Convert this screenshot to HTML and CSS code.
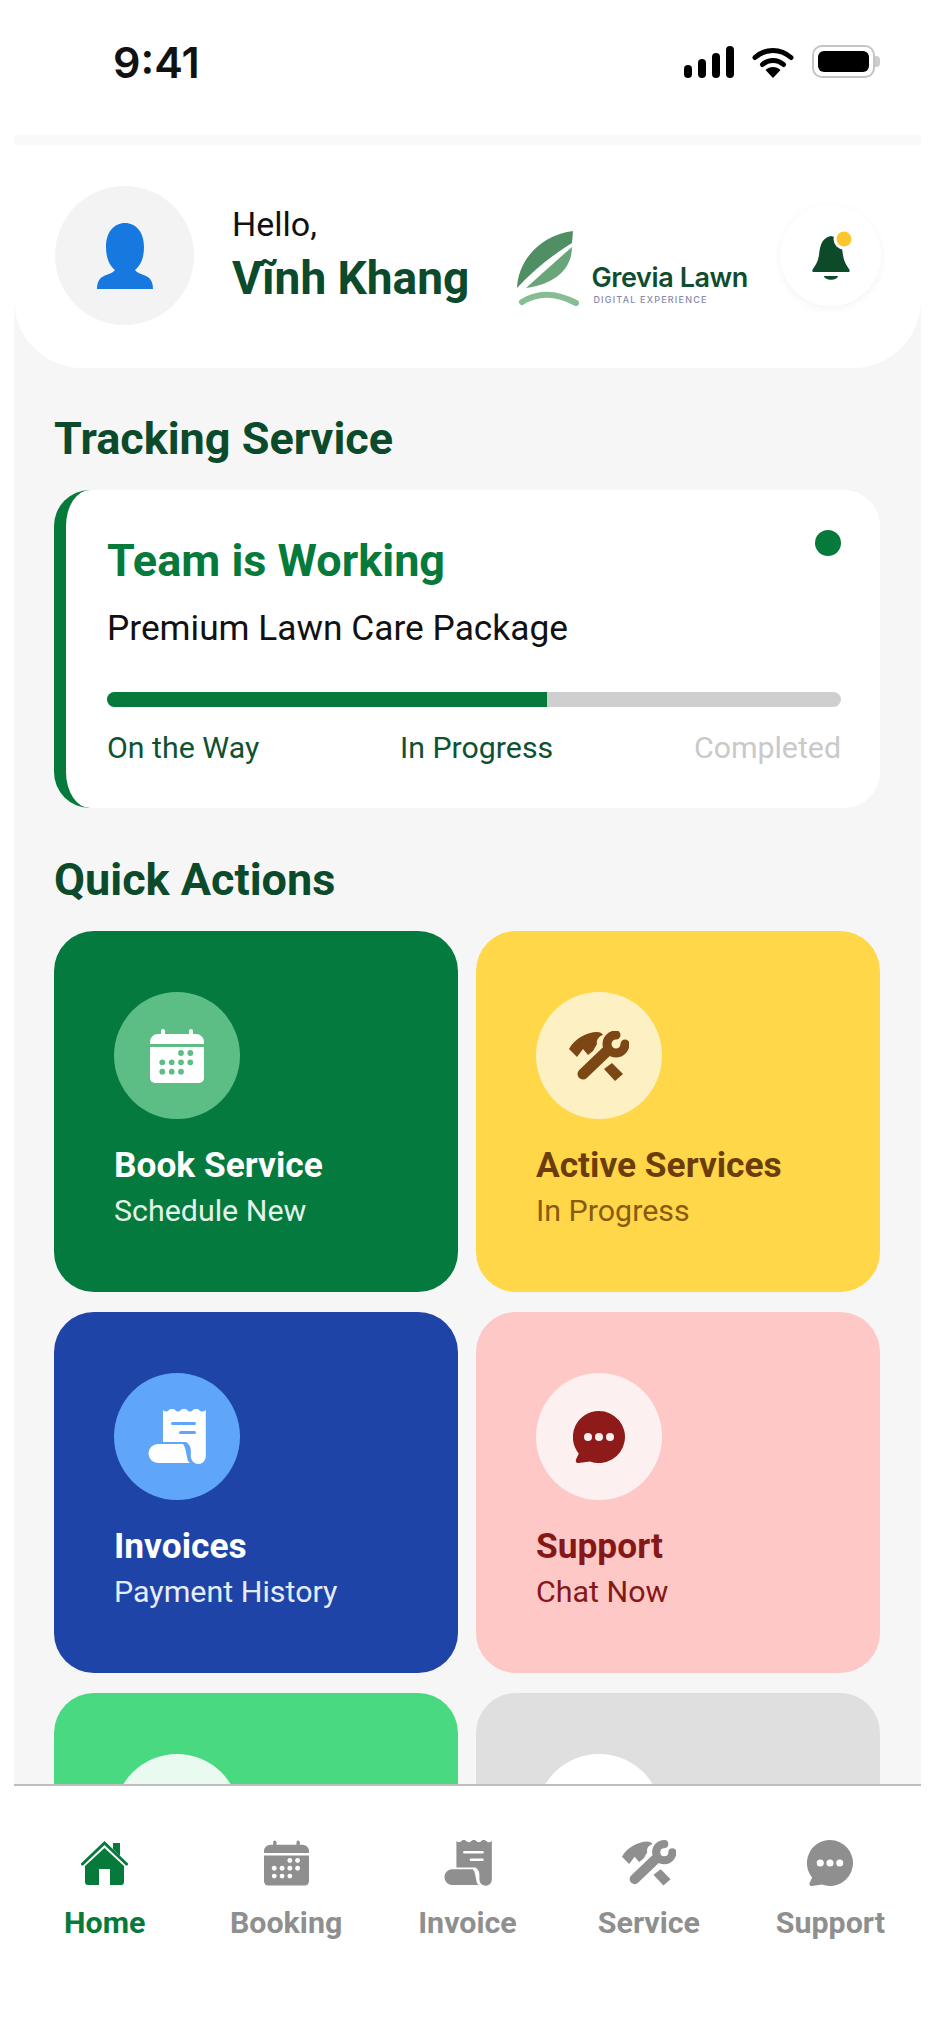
FILE: index.html
```html
<!DOCTYPE html>
<html lang="en">

<head>
  <meta charset="UTF-8">
  <meta name="viewport" content="width=device-width, initial-scale=1.0">
  <title>Grevia Lawn</title>
  <link rel="stylesheet" href="styles.css">
</head>

<body>

  <!-- shared icons -->
  <svg class="sprite" aria-hidden="true">
    <symbol id="i-calendar" viewBox="0 0 54 54">
      <path d="M11 5V2a2 2 0 0 1 4 0v3h24V2a2 2 0 0 1 4 0v3h3a8 8 0 0 1 8 8v2H0v-2a8 8 0 0 1 8-8z"/>
      <path d="M0 18h54v31a5 5 0 0 1-5 5H5a5 5 0 0 1-5-5z"/>
      <g class="hole">
        <circle cx="31" cy="24" r="2.9"/><circle cx="40.3" cy="24" r="2.9"/>
        <circle cx="12.3" cy="33.3" r="2.9"/><circle cx="21.7" cy="33.3" r="2.9"/><circle cx="31" cy="33.3" r="2.9"/><circle cx="40.3" cy="33.3" r="2.9"/>
        <circle cx="12.3" cy="42.7" r="2.9"/><circle cx="21.7" cy="42.7" r="2.9"/><circle cx="31" cy="42.7" r="2.9"/>
      </g>
    </symbol>
    <symbol id="i-tools" viewBox="0 0 60 50">
      <path d="M0 18C5 8 18 1 28 1 31 1 33 2 34 4 30 5 27 9 28 13L24 20 19 24 14 18 8 26Z"/>
      <path d="M35 38 43 32 54 43 46 50Z"/>
      <path d="M14 43 37 21" class="line" stroke-width="11" stroke-linecap="round"/>
      <path d="M47 4A9 9 0 1 0 56 13" class="line" stroke-width="9" stroke-linecap="round"/>
    </symbol>
    <symbol id="i-receipt" viewBox="0 0 58 55">
      <path d="M15 1q3 3 6 0t6 0 6 0 6 0 6 0 6 0 6.800 0V47.500a7.500 7.500 0 0 1-15 0V42C43 38 41 35 38 33H15z"/>
      <path d="M10 35H35C38 39 38 44 39 48 39.500 51 40 53 42 54H10a9.500 9.500 0 0 1 0-19z"/>
      <g class="hole">
        <rect x="23" y="13" width="25" height="3" rx="1.500"/>
        <rect x="31" y="22" width="17" height="3" rx="1.500"/>
      </g>
    </symbol>
    <symbol id="i-chat" viewBox="0 0 52 52">
      <path d="M26 0a26 26 0 1 1-9 50.400L5.500 52C3 52.200 2.400 50.500 3 48.500L5.800 42.500A26 26 0 0 1 26 0z"/>
      <g class="hole">
        <circle cx="15" cy="26" r="4"/><circle cx="26" cy="26" r="4"/><circle cx="37" cy="26" r="4"/>
      </g>
    </symbol>
    <symbol id="i-home" viewBox="0 0 47 44">
      <path d="M32 2h7v13l-7-7z"/>
      <path d="M23.500 7 43 25v16a3 3 0 0 1-3 3H29V28H18v16H7a3 3 0 0 1-3-3V25z"/>
      <path d="M1.500 23 23.500 2l22 21" class="line" fill="none" stroke-width="3" stroke-linecap="round"/>
    </symbol>
  </svg>

  <div class="status-bar">
    <span class="time">9:41</span>
    <div class="status-icons">
      <div class="signal">
        <span class="bar bar-1"></span>
        <span class="bar bar-2"></span>
        <span class="bar bar-3"></span>
        <span class="bar bar-4"></span>
      </div>
      <svg class="wifi" viewBox="0 0 42 32">
        <path d="M3 11.500C13.500 2 28.500 2 39 11.500" fill="none" stroke="#000" stroke-width="5" stroke-linecap="round"/>
        <path d="M10.500 18.500C16.500 13 25.500 13 31.500 18.500" fill="none" stroke="#000" stroke-width="5" stroke-linecap="round"/>
        <path d="M13.500 24C17.500 20 24.500 20 28.500 24L21 32z"/>
      </svg>
      <div class="battery">
        <div class="battery-body"><span class="battery-level"></span></div>
        <span class="battery-nub"></span>
      </div>
    </div>
  </div>

  <div class="app">
    <main class="content">
      <header class="header">
        <div class="avatar">
          <svg class="avatar-icon" viewBox="0 0 56 66">
            <path d="M28 0C39 0 47 9 47 24 47 36 43 43 38 47 40 50 45 51 49 53 54 55 56 60 56 66H0C0 60 2 55 7 53 11 51 16 50 18 47 13 43 9 36 9 24 9 9 17 0 28 0z"/>
          </svg>
        </div>
        <div class="greeting">
          <div class="hello">Hello,</div>
          <div class="name">Vĩnh Khang</div>
        </div>
        <div class="logo">
          <svg class="logo-mark" viewBox="0 0 64 76">
            <path d="M1 58C2 32 22 6 57 1L56 13Q25 32 1 58z" fill="#4f8f63"/>
            <path d="M10 58Q32 38 56 17C56 38 40 54 10 58z" fill="#6aa57a"/>
            <path d="M6 72Q30 57 60 73" fill="none" stroke="#86bd92" stroke-width="6" stroke-linecap="round"/>
          </svg>
          <div class="logo-text">
            <div class="logo-name">Grevia Lawn</div>
            <div class="logo-tag">DIGITAL EXPERIENCE</div>
          </div>
        </div>
        <div class="bell">
          <svg class="bell-icon" viewBox="0 0 42 51">
            <path d="M19 6C9 8 8 17 7 25 6 32 3 36 1 39 0 41 0 42 2 42H36C38 42 38 41 37 39 35 36 32 32 31 25 30 17 29 8 19 6z" fill="#0c4a2a"/>
            <path d="M12 46H26C25 51 13 51 12 46z" fill="#0c4a2a"/>
            <circle cx="32" cy="9" r="10.500" fill="#fff"/>
            <circle cx="32" cy="9" r="7.500" fill="#fdc62d"/>
          </svg>
        </div>
      </header>

      <section class="section">
        <h2 class="section-title">Tracking Service</h2>
        <div class="track-card">
          <div class="track-top">
            <h3 class="track-title">Team is Working</h3>
            <span class="track-dot"></span>
          </div>
          <p class="track-package">Premium Lawn Care Package</p>
          <div class="progress"><div class="progress-fill"></div></div>
          <div class="steps">
            <span>On the Way</span>
            <span>In Progress</span>
            <span class="step-off">Completed</span>
          </div>
        </div>
      </section>

      <section class="section">
        <h2 class="section-title title-actions">Quick Actions</h2>
        <div class="actions">
          <div class="action action-green">
            <div class="action-icon"><svg class="ic-calendar"><use href="#i-calendar"/></svg></div>
            <div class="action-title">Book Service</div>
            <div class="action-sub">Schedule New</div>
          </div>
          <div class="action action-yellow">
            <div class="action-icon"><svg class="ic-tools"><use href="#i-tools"/></svg></div>
            <div class="action-title">Active Services</div>
            <div class="action-sub">In Progress</div>
          </div>
          <div class="action action-blue">
            <div class="action-icon"><svg class="ic-receipt"><use href="#i-receipt"/></svg></div>
            <div class="action-title">Invoices</div>
            <div class="action-sub">Payment History</div>
          </div>
          <div class="action action-pink">
            <div class="action-icon"><svg class="ic-chat"><use href="#i-chat"/></svg></div>
            <div class="action-title">Support</div>
            <div class="action-sub">Chat Now</div>
          </div>
          <div class="action action-mint">
            <div class="action-icon"></div>
          </div>
          <div class="action action-grey">
            <div class="action-icon"></div>
          </div>
        </div>
      </section>
    </main>

    <nav class="tabbar">
      <div class="tab tab-active">
        <svg class="tab-home"><use href="#i-home"/></svg>
        <span>Home</span>
      </div>
      <div class="tab">
        <svg class="tab-calendar"><use href="#i-calendar"/></svg>
        <span>Booking</span>
      </div>
      <div class="tab">
        <svg class="tab-receipt"><use href="#i-receipt"/></svg>
        <span>Invoice</span>
      </div>
      <div class="tab">
        <svg class="tab-tools"><use href="#i-tools"/></svg>
        <span>Service</span>
      </div>
      <div class="tab">
        <svg class="tab-chat"><use href="#i-chat"/></svg>
        <span>Support</span>
      </div>
    </nav>
  </div>

</body>

</html>
```

FILE: styles.css
```css
* {
  box-sizing: border-box;
}

html,
body {
  height: 100%;
}

body {
  margin: 0;
  display: flex;
  flex-direction: column;
  overflow: hidden;
  background: #fff;
  font-family: Roboto, "Liberation Sans", sans-serif;
}

.sprite {
  display: none;
}

/* icon parts */
svg {
  fill: currentColor;
}

.hole {
  fill: var(--hole);
}

.line {
  fill: none;
  stroke: currentColor;
}

/* Status bar */
.status-bar {
  flex: none;
  height: 135px;
  padding: 0 54px 12px 113px;
  display: flex;
  align-items: center;
  justify-content: space-between;
}

.time {
  font-family: Inter, sans-serif;
  font-size: 43px;
  font-weight: 600;
  color: #111;
}

.status-icons {
  display: flex;
  align-items: center;
  gap: 18px;
}

.signal {
  display: flex;
  align-items: flex-end;
  gap: 6px;
  height: 32px;
}

.bar {
  width: 8px;
  background: #000;
  border-radius: 4px;
}

.bar-1 { height: 13px; }
.bar-2 { height: 19px; }
.bar-3 { height: 25px; }
.bar-4 { height: 32px; }

.wifi {
  width: 42px;
  height: 32px;
}

.battery {
  display: flex;
  align-items: center;
}

.battery-body {
  width: 63px;
  height: 33px;
  padding: 4px;
  border: 2px solid #c4c4c4;
  border-radius: 10px;
}

.battery-level {
  display: block;
  height: 100%;
  background: #000;
  border-radius: 6px;
}

.battery-nub {
  width: 5px;
  height: 11px;
  background: #ccc;
  border-radius: 0 4px 4px 0;
}

/* App frame */
.app {
  flex: 1;
  min-height: 0;
  margin: 0 13px 0 14px;
  padding-top: 10px;
  display: flex;
  flex-direction: column;
  background: #f9f9f9;
}

.content {
  flex: 1;
  min-height: 0;
  overflow: hidden;
  background: #f6f6f6;
}

/* Header */
.header {
  height: 223px;
  padding: 0 40px 2px 41px;
  display: flex;
  align-items: center;
  background: #fff;
  border-radius: 0 0 68px 68px;
}

.avatar {
  width: 139px;
  height: 139px;
  margin-right: 38px;
  flex: none;
  display: flex;
  align-items: center;
  justify-content: center;
  background: #f3f3f3;
  border-radius: 50%;
}

.avatar-icon {
  width: 56px;
  height: 66px;
  color: #1778e0;
}

.greeting {
  margin-top: -4px;
}

.hello {
  font-size: 34px;
  line-height: 40px;
  color: #111;
}

.name {
  margin-top: 8px;
  font-size: 46px;
  line-height: 52px;
  font-weight: 700;
  color: #0b4a2a;
}

.logo {
  margin-left: auto;
  margin-right: 32px;
  margin-top: 24px;
  display: flex;
  align-items: flex-end;
  gap: 11px;
}

.logo-mark {
  width: 64px;
  height: 76px;
}

.logo-name {
  font-family: Inter, sans-serif;
  font-size: 27px;
  line-height: 32px;
  font-weight: 600;
  letter-spacing: -0.4px;
  color: #0f4d30;
}

.logo-tag {
  margin-left: 2px;
  font-family: Inter, sans-serif;
  font-size: 9px;
  line-height: 12px;
  font-weight: 500;
  letter-spacing: 1.2px;
  color: #8a88ac;
}

.bell {
  width: 101px;
  height: 101px;
  flex: none;
  display: flex;
  align-items: center;
  justify-content: center;
  background: #fff;
  border-radius: 50%;
  box-shadow: 0 2px 8px rgba(0, 0, 0, 0.05);
}

.bell-icon {
  width: 42px;
  height: 51px;
  margin-left: 4px;
}

/* Sections */
.section {
  padding: 0 41px 0 40px;
}

.section-title {
  margin: 46px 0 26px;
  font-size: 45px;
  line-height: 50px;
  font-weight: 700;
  color: #0b4a2a;
}

.title-actions {
  margin-top: 47px;
  margin-bottom: 26px;
}

/* Tracking card */
.track-card {
  height: 318px;
  padding: 46px 39px 0 41px;
  background: #fff;
  border-left: 12px solid #067a3b;
  border-radius: 36px;
}

.track-top {
  display: flex;
  justify-content: space-between;
}

.track-title {
  margin: 0;
  font-size: 45px;
  line-height: 50px;
  font-weight: 700;
  color: #067a3b;
}

.track-dot {
  width: 26px;
  height: 26px;
  margin-top: -6px;
  background: #067a3b;
  border-radius: 50%;
}

.track-package {
  margin: 22px 0 0;
  font-size: 35.300px;
  line-height: 40px;
  color: #111;
}

.progress {
  height: 15px;
  margin-top: 44px;
  background: #cfcfcf;
  border-radius: 8px;
  overflow: hidden;
}

.progress-fill {
  width: 60%;
  height: 100%;
  background: #067a3b;
}

.steps {
  margin-top: 24px;
  display: flex;
  justify-content: space-between;
  font-size: 30.300px;
  line-height: 34px;
  color: #0f5231;
}

.step-off {
  color: #c9c9c9;
}

/* Quick actions */
.actions {
  display: grid;
  grid-template-columns: 1fr 1fr;
  grid-auto-rows: 361px;
  column-gap: 18px;
  row-gap: 20px;
}

.action {
  padding: 61px 60px;
  border-radius: 40px;
}

.action-icon {
  width: 126px;
  height: 127px;
  margin-bottom: 26px;
  display: flex;
  align-items: center;
  justify-content: center;
  border-radius: 50%;
}

.action-title {
  font-size: 35.300px;
  line-height: 40px;
  font-weight: 700;
}

.action-sub {
  margin-top: 9px;
  font-size: 30.400px;
  line-height: 34px;
}

.ic-calendar { width: 54px; height: 54px; }
.ic-tools { width: 60px; height: 50px; }
.ic-receipt { width: 58px; height: 55px; }
.ic-chat { width: 52px; height: 52px; }

.action-green {
  background: #047a3e;
  color: #fff;
}

.action-green .action-icon {
  background: #5cbd85;
  --hole: #5cbd85;
}

.action-green .action-sub {
  color: #e4f3ea;
}

.action-yellow {
  background: #ffd748;
  color: #6b3d0c;
}

.action-yellow .action-icon {
  background: #fdf1c4;
  color: #7c4615;
}

.action-yellow .action-sub {
  color: #8a5a10;
}

.action-blue {
  background: #1e44a8;
  color: #fff;
}

.action-blue .action-icon {
  background: #5fa5fa;
  --hole: #5fa5fa;
}

.action-blue .action-sub {
  color: #e6ecfa;
}

.action-pink {
  background: #fdc8c6;
  color: #861717;
}

.action-pink .action-icon {
  background: #fdf0f0;
  --hole: #fdf0f0;
  color: #8e1a1a;
}

.action-mint {
  background: #48d981;
}

.action-mint .action-icon {
  background: #e9fbf0;
}

.action-grey {
  background: #dfdfdf;
}

.action-grey .action-icon {
  background: #fff;
}

/* Bottom tabs */
.tabbar {
  flex: none;
  height: 237px;
  padding-top: 54px;
  display: flex;
  background: #fff;
  border-top: 2px solid #bdbdbd;
  --hole: #fff;
}

.tab {
  flex: 1;
  display: flex;
  flex-direction: column;
  align-items: center;
  color: #8f8f8f;
  font-size: 30.400px;
  line-height: 34px;
  font-weight: 700;
}

.tab svg {
  height: 46px;
  margin-bottom: 20px;
}

.tab-active {
  color: #067a3b;
}

.tab-home { width: 47px; }
.tab-calendar { width: 45px; }
.tab-receipt { width: 48px; }
.tab-tools { width: 54px; }
.tab-chat { width: 46px; }
```
